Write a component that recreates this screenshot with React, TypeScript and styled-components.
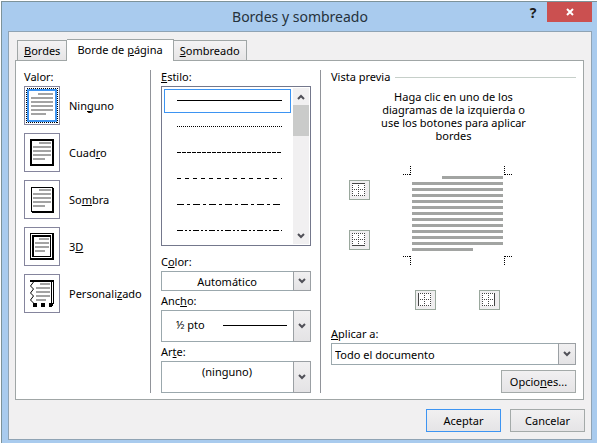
import React, { useState } from "react";
import styled, { createGlobalStyle } from "styled-components";

const GlobalStyle = createGlobalStyle`
  *, *::before, *::after { box-sizing: border-box; }
  body { margin: 0; background: #fff; }
  body, button, select { font-family: "Noto Sans", "Open Sans", sans-serif; font-size: 11px; color: #000; }
  svg { display: block; }
`;

const Page = styled.div`
  display: flex;
  min-height: 100vh;
  padding: 1px 0 0 1px;
`;

const Window = styled.main`
  flex: 1;
  padding: 0 5px 3px 6px;
  background: #a9cbee;
  border-top: 1px solid #7d9299;
  border-left: 1px solid #7d9299;
  line-height: 14px;
`;

const TitleBar = styled.header`
  display: grid;
  grid-template-columns: 1fr auto 1fr;
  height: 29px;
`;

const Title = styled.h1`
  grid-column: 2;
  margin: 0;
  padding-top: 5px;
  font-size: 14px;
  line-height: 20px;
  font-weight: 400;
  color: #26323c;
`;

const WindowButtons = styled.div`
  display: flex;
  justify-content: flex-end;
  align-items: flex-start;
`;

const WindowButton = styled.button<{ $close?: boolean }>`
  display: flex;
  align-items: center;
  justify-content: center;
  width: ${(p) => (p.$close ? 45 : 28)}px;
  height: 20px;
  padding: 0;
  border: 0;
  background: ${(p) => (p.$close ? "#cb5050" : "transparent")};
  color: ${(p) => (p.$close ? "#fff" : "#1c1c1c")};
  font-size: 14px;
  font-weight: 700;
`;

const Body = styled.div`
  padding: 7px 6px;
  background: #f1f0f1;
  border: 1px solid #8fa3b4;
`;

const TabList = styled.div`
  display: flex;
  align-items: flex-end;
  padding-left: 2px;
`;

const Tab = styled.button<{ $active: boolean }>`
  position: relative;
  height: ${(p) => (p.$active ? 22 : 20)}px;
  margin-bottom: ${(p) => (p.$active ? -1 : 0)}px;
  padding: ${(p) => (p.$active ? "0 10px 2px" : "0 6px")};
  border: 1px solid #a0a6a6;
  border-bottom: 0;
  background: ${(p) => (p.$active ? "#fff" : "linear-gradient(#f4f3f4, #e6e5e6)")};

  & + & { border-left: 0; }
`;

const Panel = styled.section`
  display: grid;
  grid-template-columns: 127px 170px 1fr;
  margin-right: 1px;
  padding: 9px 7px 6px 8px;
  background: #fff;
  border: 1px solid #a0a6a6;
`;

const Column = styled.div`
  min-width: 0;
  & + & { padding-left: 10px; }
  &:not(:last-child) { border-right: 1px solid #91949a; }
`;

const Caption = styled.div`
  height: 16px;
`;

const FieldLabel = styled.label<{ $gap?: number }>`
  display: block;
  margin-top: ${(p) => p.$gap ?? 3}px;
  padding-bottom: 2px;
`;

const Settings = styled.div`
  display: grid;
  gap: 8px;
`;

const Setting = styled.div`
  display: flex;
  align-items: center;
  gap: 9px;
`;

const SettingButton = styled.button`
  flex: none;
  width: 36px;
  height: 39px;
  padding: 0;
  border: 1px solid #85859d;
  background: #fff;
`;

const StyleBox = styled.div`
  display: flex;
  width: 150px;
  height: 160px;
  border: 1px solid #74788c;
  background: #fff;
`;

const StyleList = styled.ul`
  flex: 1;
  margin: 0;
  padding: 2px;
  list-style: none;
  overflow: hidden;
`;

const StyleItem = styled.li<{ $selected: boolean }>`
  display: flex;
  align-items: center;
  height: 24px;
  margin-bottom: 2px;
  padding: 0 0 2px 12px;
  border: 1px solid ${(p) => (p.$selected ? "#3d94f2" : "transparent")};
`;

const ScrollBar = styled.div`
  display: flex;
  flex-direction: column;
  width: 16px;
  margin: 1px 1px 1px 0;
  background: #f1f0f1;
`;

const ScrollButton = styled.button`
  display: flex;
  align-items: center;
  justify-content: center;
  height: 17px;
  padding: 0;
  border: 0;
  background: transparent;
`;

const Thumb = styled.div`
  height: 31px;
  background: #cacbca;
`;

const Spacer = styled.div`
  flex: 1;
`;

const SelectBox = styled.div<{ $height: number; $wide?: boolean }>`
  position: relative;
  width: ${(p) => (p.$wide ? "auto" : "150px")};
  height: ${(p) => p.$height}px;
`;

const Select = styled.select<{ $align?: "center"; $raise?: number; $indent?: number }>`
  appearance: none;
  width: 100%;
  height: 100%;
  margin: 0;
  padding: 0 18px ${(p) => p.$raise ?? 0}px ${(p) => p.$indent ?? 0}px;
  border: 1px solid #9ba8ad;
  border-radius: 0;
  background: #fff;
  text-align-last: ${(p) => p.$align ?? "left"};
`;

const SelectArrow = styled.span`
  position: absolute;
  inset: 0 0 0 auto;
  display: flex;
  align-items: center;
  justify-content: center;
  width: 18px;
  border: 1px solid #9ba0a4;
  background: linear-gradient(#f1f0f1, #e4e3e5);
  pointer-events: none;
`;

const WidthSample = styled.span`
  position: absolute;
  top: 15px;
  left: 62px;
  width: 64px;
  height: 1px;
  background: #000;
  pointer-events: none;
`;

const PreviewHeading = styled.div`
  display: flex;
  align-items: center;
  gap: 5px;
  height: 14px;

  &::after { content: ""; flex: 1; height: 1px; background: #c6cfc9; }
`;

const Hint = styled.p`
  width: 160px;
  margin: 6px auto 0;
  line-height: 13px;
  text-align: center;
`;

const PreviewArea = styled.div`
  display: grid;
  grid-template-columns: 21px 110px;
  justify-content: center;
  column-gap: 33px;
  row-gap: 24px;
  margin-top: 24px;
  padding-right: 45px;
`;

const SideButtons = styled.div`
  display: grid;
  align-content: start;
  gap: 30px;
  padding-top: 14px;
`;

const BottomButtons = styled.div`
  display: flex;
  grid-column: 2;
  gap: 43px;
  padding-left: 12px;
`;

const EdgeButton = styled.button`
  width: 21px;
  height: 20px;
  padding: 0;
  border: 1px solid #9aa89d;
  background: #efeeef;
`;

const PanelActions = styled.div`
  display: flex;
  justify-content: flex-end;
  margin-top: 5px;
`;

const Footer = styled.footer`
  display: flex;
  justify-content: flex-end;
  gap: 9px;
  padding-top: 9px;
`;

const PushButton = styled.button<{ $primary?: boolean }>`
  width: 75px;
  height: 23px;
  padding: 0;
  border: 1px solid ${(p) => (p.$primary ? "#3d94f2" : "#a4aaa9")};
  background: linear-gradient(#f1f0f1, #e5e4e6);
`;

const Chevron = ({ up }: { up?: boolean }) => (
  <svg width="8" height="6" viewBox="0 0 8 6" aria-hidden="true">
    <path d={up ? "M1 5 4 2 7 5" : "M1 1 4 4 7 1"} fill="none" stroke="#505058" strokeWidth="2" />
  </svg>
);

type Kind = "none" | "box" | "shadow" | "three" | "custom";

const pageLines: Record<Kind, { x: number; y: number; w: number; n: number; indent: number; last: number }> = {
  none: { x: 6, y: 6, w: 22, n: 6, indent: 7, last: 15 },
  box: { x: 8, y: 8, w: 18, n: 5, indent: 6, last: 12 },
  shadow: { x: 8, y: 8, w: 18, n: 5, indent: 6, last: 12 },
  three: { x: 10, y: 10, w: 14, n: 4, indent: 4, last: 10 },
  custom: { x: 11, y: 8, w: 14, n: 5, indent: 4, last: 10 },
};

const SettingIcon = ({ kind }: { kind: Kind }) => {
  const l = pageLines[kind];
  return (
    <svg width="34" height="37" viewBox="0 0 34 37" shapeRendering="crispEdges" aria-hidden="true">
      {kind === "none" && (
        <g fill="none">
          <rect x="1.5" y="1.5" width="31" height="34" stroke="#000" strokeDasharray="1 1" />
          <rect x="3" y="3" width="28" height="31" stroke="#3d94f2" strokeWidth="2" />
        </g>
      )}
      {kind === "box" && <rect x="6" y="6" width="22" height="25" fill="none" stroke="#000" strokeWidth="2" />}
      {kind === "shadow" && <path d="M6 6h22v1h1v25H7v-1H6zM7 7v23h20V7z" fillRule="evenodd" />}
      {kind === "three" && (
        <g>
          <path d="M5 5h24v27H5zM6 6v24h21V6z" fillRule="evenodd" />
          <path d="M7 7h19v22H7zM9 9v19h16V9z" fillRule="evenodd" />
        </g>
      )}
      {kind === "custom" && (
        <g>
          <path d="M5 5h24v2H5zM26 7h1v21h-1zM28 7h1v22h-1zM8 28h4v4H8zM16 28h4v4h-4zM24 28h4v3h-1v1h-3z" />
          <path
            d="M8.5 7 5.5 11 8.5 14 5.5 18 8.5 21 5.5 25 8.5 28"
            fill="none"
            stroke="#000"
            shapeRendering="geometricPrecision"
          />
        </g>
      )}
      {Array.from({ length: l.n }, (_, i) => (
        <rect
          key={i}
          x={i === 0 ? l.x + l.indent : l.x}
          y={l.y + i * 4}
          width={i === 0 ? l.w - l.indent : i === l.n - 1 ? l.last : l.w}
          height="2"
          fill="#a3a3a3"
        />
      ))}
    </svg>
  );
};

const LineSample = ({ dash }: { dash?: string }) => (
  <svg width="105" height="1" viewBox="0 0 105 1" shapeRendering="crispEdges" aria-hidden="true">
    <path d="M0 .5h105" stroke="#000" strokeDasharray={dash} />
  </svg>
);

const PagePreview = () => (
  <svg width="110" height="100" viewBox="0 0 110 100" shapeRendering="crispEdges" role="img" aria-label="Vista previa">
    {Array.from({ length: 13 }, (_, i) => (
      <rect key={i} x={i === 0 ? 39 : 9} y={10 + i * 6} width={i === 0 || i === 12 ? 61 : 91} height="3" fill="#a2a4a2" />
    ))}
    <path
      d="M0 8.5h8M7.5 0v9M102 8.5h8M101.5 0v9M0 90.5h8M7.5 90v9M102 90.5h8M101.5 90v9"
      stroke="#000"
      strokeDasharray="1 1"
    />
  </svg>
);

const edgePaths = { top: "M2 2.5h13", bottom: "M2 14.5h13", left: "M2.5 2v13", right: "M14.5 2v13" };

const EdgeIcon = ({ edge }: { edge: keyof typeof edgePaths }) => (
  <svg width="19" height="18" viewBox="0 0 19 18" shapeRendering="crispEdges" aria-hidden="true">
    <path d="M2 2h13v13H2z" fill="#fff" />
    <path
      d="M2 2.5h13M2 8.5h13M2 14.5h13M2.5 2v13M8.5 2v13M14.5 2v13"
      stroke="#444"
      strokeDasharray="1 1"
    />
    <path d={edgePaths[edge]} stroke="#444" />
  </svg>
);

const settings: { kind: Kind; label: React.ReactNode }[] = [
  { kind: "none", label: <>Nin<u>g</u>uno</> },
  { kind: "box", label: <>Cuad<u>r</u>o</> },
  { kind: "shadow", label: <>So<u>m</u>bra</> },
  { kind: "three", label: <>3<u>D</u></> },
  { kind: "custom", label: <>Personali<u>z</u>ado</> },
];

const lineStyles = [undefined, "1 1", "4 1", "4 4", "7 3 3 3", "6 2 2 2 2 2"];

export default function App() {
  const [setting, setSetting] = useState<Kind>("none");
  const [lineStyle, setLineStyle] = useState(0);

  return (
    <Page>
      <GlobalStyle />
      <Window>
        <TitleBar>
          <Title>Bordes y sombreado</Title>
          <WindowButtons>
            <WindowButton aria-label="Ayuda">?</WindowButton>
            <WindowButton $close aria-label="Cerrar">
              <svg width="8" height="8" viewBox="0 0 8 8" aria-hidden="true">
                <path d="M1 1l6 6M7 1L1 7" stroke="#fff" strokeWidth="2" />
              </svg>
            </WindowButton>
          </WindowButtons>
        </TitleBar>
        <Body>
          <TabList role="tablist">
            <Tab role="tab" aria-selected={false} $active={false}><u>B</u>ordes</Tab>
            <Tab role="tab" aria-selected $active>Borde de <u>p</u>ágina</Tab>
            <Tab role="tab" aria-selected={false} $active={false}><u>S</u>ombreado</Tab>
          </TabList>
          <Panel role="tabpanel">
            <Column>
              <Caption>Valor:</Caption>
              <Settings>
                {settings.map(({ kind, label }) => (
                  <Setting key={kind}>
                    <SettingButton id={kind} aria-pressed={setting === kind} onClick={() => setSetting(kind)}>
                      <SettingIcon kind={kind} />
                    </SettingButton>
                    <label htmlFor={kind}>{label}</label>
                  </Setting>
                ))}
              </Settings>
            </Column>
            <Column>
              <Caption id="style-label"><u>E</u>stilo:</Caption>
              <StyleBox>
                <StyleList role="listbox" aria-labelledby="style-label">
                  {lineStyles.map((dash, i) => (
                    <StyleItem
                      key={i}
                      role="option"
                      aria-selected={lineStyle === i}
                      $selected={lineStyle === i}
                      onClick={() => setLineStyle(i)}
                    >
                      <LineSample dash={dash} />
                    </StyleItem>
                  ))}
                </StyleList>
                <ScrollBar>
                  <ScrollButton aria-label="Subir"><Chevron up /></ScrollButton>
                  <Thumb />
                  <Spacer />
                  <ScrollButton aria-label="Bajar"><Chevron /></ScrollButton>
                </ScrollBar>
              </StyleBox>
              <FieldLabel htmlFor="color" $gap={9}>C<u>o</u>lor:</FieldLabel>
              <SelectBox $height={20}>
                <Select id="color" $align="center"><option>Automático</option></Select>
                <SelectArrow><Chevron /></SelectArrow>
              </SelectBox>
              <FieldLabel htmlFor="width">Anc<u>h</u>o:</FieldLabel>
              <SelectBox $height={32}>
                <Select id="width" $indent={14} $raise={4}><option>½ pto</option></Select>
                <WidthSample />
                <SelectArrow><Chevron /></SelectArrow>
              </SelectBox>
              <FieldLabel htmlFor="art">Ar<u>t</u>e:</FieldLabel>
              <SelectBox $height={32}>
                <Select id="art" $align="center" $raise={12}><option>(ninguno)</option></Select>
                <SelectArrow><Chevron /></SelectArrow>
              </SelectBox>
            </Column>
            <Column>
              <PreviewHeading>Vista previa</PreviewHeading>
              <Hint>Haga clic en uno de los diagramas de la izquierda o use los botones para aplicar bordes</Hint>
              <PreviewArea>
                <SideButtons>
                  <EdgeButton aria-label="Borde superior"><EdgeIcon edge="top" /></EdgeButton>
                  <EdgeButton aria-label="Borde inferior"><EdgeIcon edge="bottom" /></EdgeButton>
                </SideButtons>
                <PagePreview />
                <BottomButtons>
                  <EdgeButton aria-label="Borde izquierdo"><EdgeIcon edge="left" /></EdgeButton>
                  <EdgeButton aria-label="Borde derecho"><EdgeIcon edge="right" /></EdgeButton>
                </BottomButtons>
              </PreviewArea>
              <FieldLabel htmlFor="apply" $gap={17}><u>A</u>plicar a:</FieldLabel>
              <SelectBox $height={22} $wide>
                <Select id="apply" $indent={3}><option>Todo el documento</option></Select>
                <SelectArrow><Chevron /></SelectArrow>
              </SelectBox>
              <PanelActions>
                <PushButton>Opcio<u>n</u>es...</PushButton>
              </PanelActions>
            </Column>
          </Panel>
          <Footer>
            <PushButton $primary>Aceptar</PushButton>
            <PushButton>Cancelar</PushButton>
          </Footer>
        </Body>
      </Window>
    </Page>
  );
}
